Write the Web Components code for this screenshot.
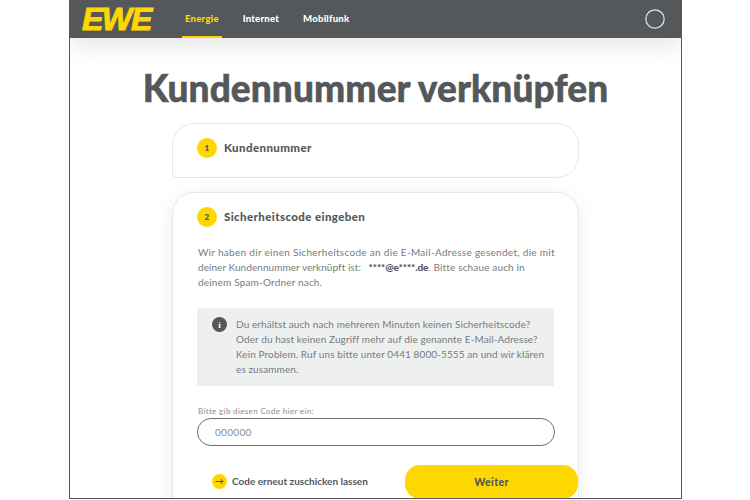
<!DOCTYPE html>
<html lang="de"><head><meta charset="utf-8"><title>EWE</title>
<style>html,body{margin:0;padding:0;background:#fff;height:100%;overflow:hidden;font-family:Lato,"Noto Sans",sans-serif;color:#54585a}</style>
</head><body>
<ewe-frame>
  <ewe-header slot="header"></ewe-header>
  <h-title>Kundennummer verknüpfen</h-title>
  <step-card num="1" label="Kundennummer" compact></step-card>
  <step-card num="2" label="Sicherheitscode eingeben">
    <code-form></code-form>
  </step-card>
</ewe-frame>
<script>
function def(name, html, init){
  customElements.define(name, class extends HTMLElement{
    connectedCallback(){
      if(this.shadowRoot) return;
      const r=this.attachShadow({mode:'open'});
      r.innerHTML=typeof html==='function'?html(this):html;
      if(init) init(r,this);
    }
  });
}
def('ewe-frame',`<style>
:host{display:block;box-sizing:border-box;width:613px;height:499px;margin-left:69px;border:solid #54585a;border-width:0 1px 1px;overflow:hidden;background:#fff}
.main{display:flex;flex-direction:column;align-items:center}
</style><slot name="header"></slot><div class="main"><slot></slot></div>`);
def('ewe-header',`<style>
:host{display:flex;align-items:center;height:38px;background:#54585a;box-shadow:0 8px 22px rgba(0,0,0,.10);position:relative;font:900 9.6px Lato,sans-serif;color:#fff}
.logo{font:italic 900 32px/38px "Liberation Sans",sans-serif;color:#ffd700;width:100px;padding-left:12px;letter-spacing:-1.3px;-webkit-text-stroke:1px #ffd700;flex:none}
nav{display:flex;height:100%;gap:18px}
a{display:flex;align-items:center;height:100%;box-sizing:border-box;border-bottom:2px solid transparent;padding:1px 3px 0;letter-spacing:.2px}
a.on{color:#ffd700;border-color:#ffd700}
svg{margin-left:auto;margin-right:16px}
</style><div class="logo">EWE</div><nav><a class="on">Energie</a><a>Internet</a><a>Mobilfunk</a></nav>
<svg width="20" height="20" viewBox="0 0 20 20"><circle cx="10" cy="10" r="9.2" fill="none" stroke="#e4e5e4" stroke-width="1.2"/></svg>`);
def('h-title',`<style>
:host{display:block;margin-top:29px;font:900 37px/42px Lato,sans-serif;color:#54585a;text-align:center;white-space:nowrap;-webkit-text-stroke:.5px #54585a;letter-spacing:.1px}
</style><slot></slot>`);
def('step-card',(h)=>{const c=h.hasAttribute('compact');return `<style>
:host{display:block;box-sizing:border-box;width:407px;margin-top:14px;border:1px solid #e6e8e8;border-radius:22px;${c?'border-bottom-left-radius:4px;':''}background:#fff;padding:14px 24px 0;${c?'height:55px;':'height:340px;box-shadow:0 4px 20px rgba(0,0,0,.07);'}}
.head{display:flex;align-items:center;gap:7px;height:20px;font:900 11.5px Lato,sans-serif;letter-spacing:.4px;color:#54585a}
.t{padding-bottom:1px}
.n{width:20px;height:20px;border-radius:50%;background:#ffd700;display:flex;align-items:center;justify-content:center;font:800 8px Lato,sans-serif}
</style><div class="head"><span class="n">${h.getAttribute('num')}</span><span class="t">${h.getAttribute('label')}</span></div><slot></slot>`});
def('code-form',`<style>
:host{display:block;font:400 10px/15px Lato,sans-serif;color:#777b7d;letter-spacing:.3px}
p{margin:18px 0 0 1px;white-space:nowrap}
.l2{letter-spacing:.06px}
.l2b{letter-spacing:.15px}
.l3{letter-spacing:.18px}
b{font-weight:900;color:#54585a;margin-left:5px;letter-spacing:-.1px}
.info{display:flex;gap:9px;box-sizing:border-box;width:357px;height:78px;margin-top:18px;padding:9px 15px;background:#eeefef;line-height:15px;letter-spacing:.1px}
.i{flex:none;width:15px;height:15px;border-radius:50%;background:#54585a;color:#fff;display:flex;align-items:center;justify-content:center;font:700 9px "Liberation Serif",serif}
.info div:last-child{white-space:nowrap}
label{display:block;margin:19px 0 0 1px;font-size:8px;line-height:12px;letter-spacing:.35px;color:#8a8d8f}
.inp{box-sizing:border-box;width:358px;height:28px;margin-top:1px;border:1px solid #6b6f71;border-radius:14px;padding-left:17px;display:flex;align-items:center;font-size:10px;letter-spacing:.3px;color:#8a8d8f}
.row{display:flex;align-items:flex-start;margin-top:21px}
.re{display:flex;align-items:center;gap:5px;margin:4px 0 0 15px;height:18px;font-weight:700;color:#54585a;font-size:10px;letter-spacing:0;white-space:nowrap;padding-top:1px}
.re span{width:15px;height:15px;border-radius:50%;background:#ffd700;display:flex;align-items:center;justify-content:center}
.btn{margin-left:auto;margin-right:-24px;width:173px;height:34px;background:#ffd700;border-radius:15px;display:flex;align-items:center;justify-content:center;font:900 10.5px Lato,sans-serif;letter-spacing:.4px;color:#54585a;margin-top:-2px}
</style>
<p>Wir haben dir einen Sicherheitscode an die E-Mail-Adresse gesendet, die mit<br><span class="l2">deiner Kundennummer verknüpft ist: </span><b>****@e****.de</b><span class="l2b">. Bitte schaue auch in</span><br><span class="l3">deinem Spam-Ordner nach.</span></p>
<div class="info"><div class="i">i</div><div>Du erhältst auch nach mehreren Minuten keinen Sicherheitscode?<br>Oder du hast keinen Zugriff mehr auf die genannte E-Mail-Adresse?<br>Kein Problem. Ruf uns bitte unter 0441 8000-5555 an und wir klären<br>es zusammen.</div></div>
<label>Bitte gib diesen Code hier ein:</label>
<div class="inp">000000</div>
<div class="row"><div class="re"><span><svg width="9" height="7" viewBox="0 0 9 7"><path d="M0.5 3.5H8M5.5 1L8 3.5L5.5 6" fill="none" stroke="#54585a" stroke-width="1"/></svg></span>Code erneut zuschicken lassen</div><div class="btn">Weiter</div></div>`);
</script>
</body></html>
